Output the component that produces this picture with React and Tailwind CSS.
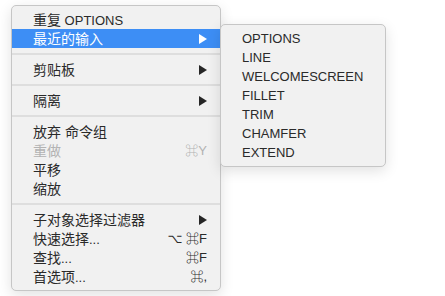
import React from "react";

const font = { fontFamily: '"Liberation Sans", "Noto Sans CJK SC", "DejaVu Sans", sans-serif' };

function Arrow({ white }) {
  return (
    <svg width="8" height="10" viewBox="0 0 8 10" className="block">
      <path d="M0 0 L8 5 L0 10 Z" fill={white ? "#ffffff" : "#262626"} />
    </svg>
  );
}

function Label({ cjk, latin }) {
  return (
    <span className="whitespace-pre">
      <span className="text-[14px]">{cjk}</span>
      {latin}
    </span>
  );
}

function Row({ cjk, latin, shortcut, arrow, active, disabled }) {
  return (
    <div
      className={
        "flex h-[19px] items-center justify-between pl-[21px] pr-[13px] " +
        (active ? "bg-[#3d8ef5] text-white" : disabled ? "text-[#b3b3b3]" : "text-[#2a2a2a]")
      }
    >
      <Label cjk={cjk} latin={latin} />
      {arrow ? <Arrow white={active} /> : shortcut ? <span className="whitespace-pre">{shortcut}</span> : null}
    </div>
  );
}

function Sep() {
  return (
    <div className="flex h-[12px] items-center">
      <div className="h-[2px] w-full bg-[#dedede]" />
    </div>
  );
}

export default function App() {
  const subItems = ["OPTIONS", "LINE", "WELCOMESCREEN", "FILLET", "TRIM", "CHAMFER", "EXTEND"];
  return (
    <div className="h-[296px] w-[445px] overflow-hidden bg-white text-[13px] leading-none" style={font}>
      <div className="flex items-start">
        <div className="ml-[11px] mt-[5px] w-[210px] rounded-[5px] border border-[#c6c6c6] bg-[#f1f1f1] py-[4px] shadow-[0_4px_14px_rgba(0,0,0,0.12)]">
          <Row cjk="重复" latin=" OPTIONS" />
          <Row cjk="最近的输入" arrow active />
          <Sep />
          <Row cjk="剪贴板" arrow />
          <Sep />
          <Row cjk="隔离" arrow />
          <Sep />
          <Row cjk="放弃 命令组" />
          <Row cjk="重做" shortcut="⌘Y" disabled />
          <Row cjk="平移" />
          <Row cjk="缩放" />
          <Sep />
          <Row cjk="子对象选择过滤器" arrow />
          <Row cjk="快速选择" latin="..." shortcut="⌥ ⌘F" />
          <Row cjk="查找" latin="..." shortcut="⌘F" />
          <Row cjk="首选项" latin="..." shortcut="⌘," />
        </div>
        <div className="ml-[-1px] mt-[24px] w-[166px] rounded-[5px] border border-[#c6c6c6] bg-[#f1f1f1] py-[4px] shadow-[0_4px_14px_rgba(0,0,0,0.12)]">
          {subItems.map((s) => (
            <div key={s} className="flex h-[19px] items-center pl-[21px] text-[#2a2a2a]">
              {s}
            </div>
          ))}
        </div>
      </div>
    </div>
  );
}
